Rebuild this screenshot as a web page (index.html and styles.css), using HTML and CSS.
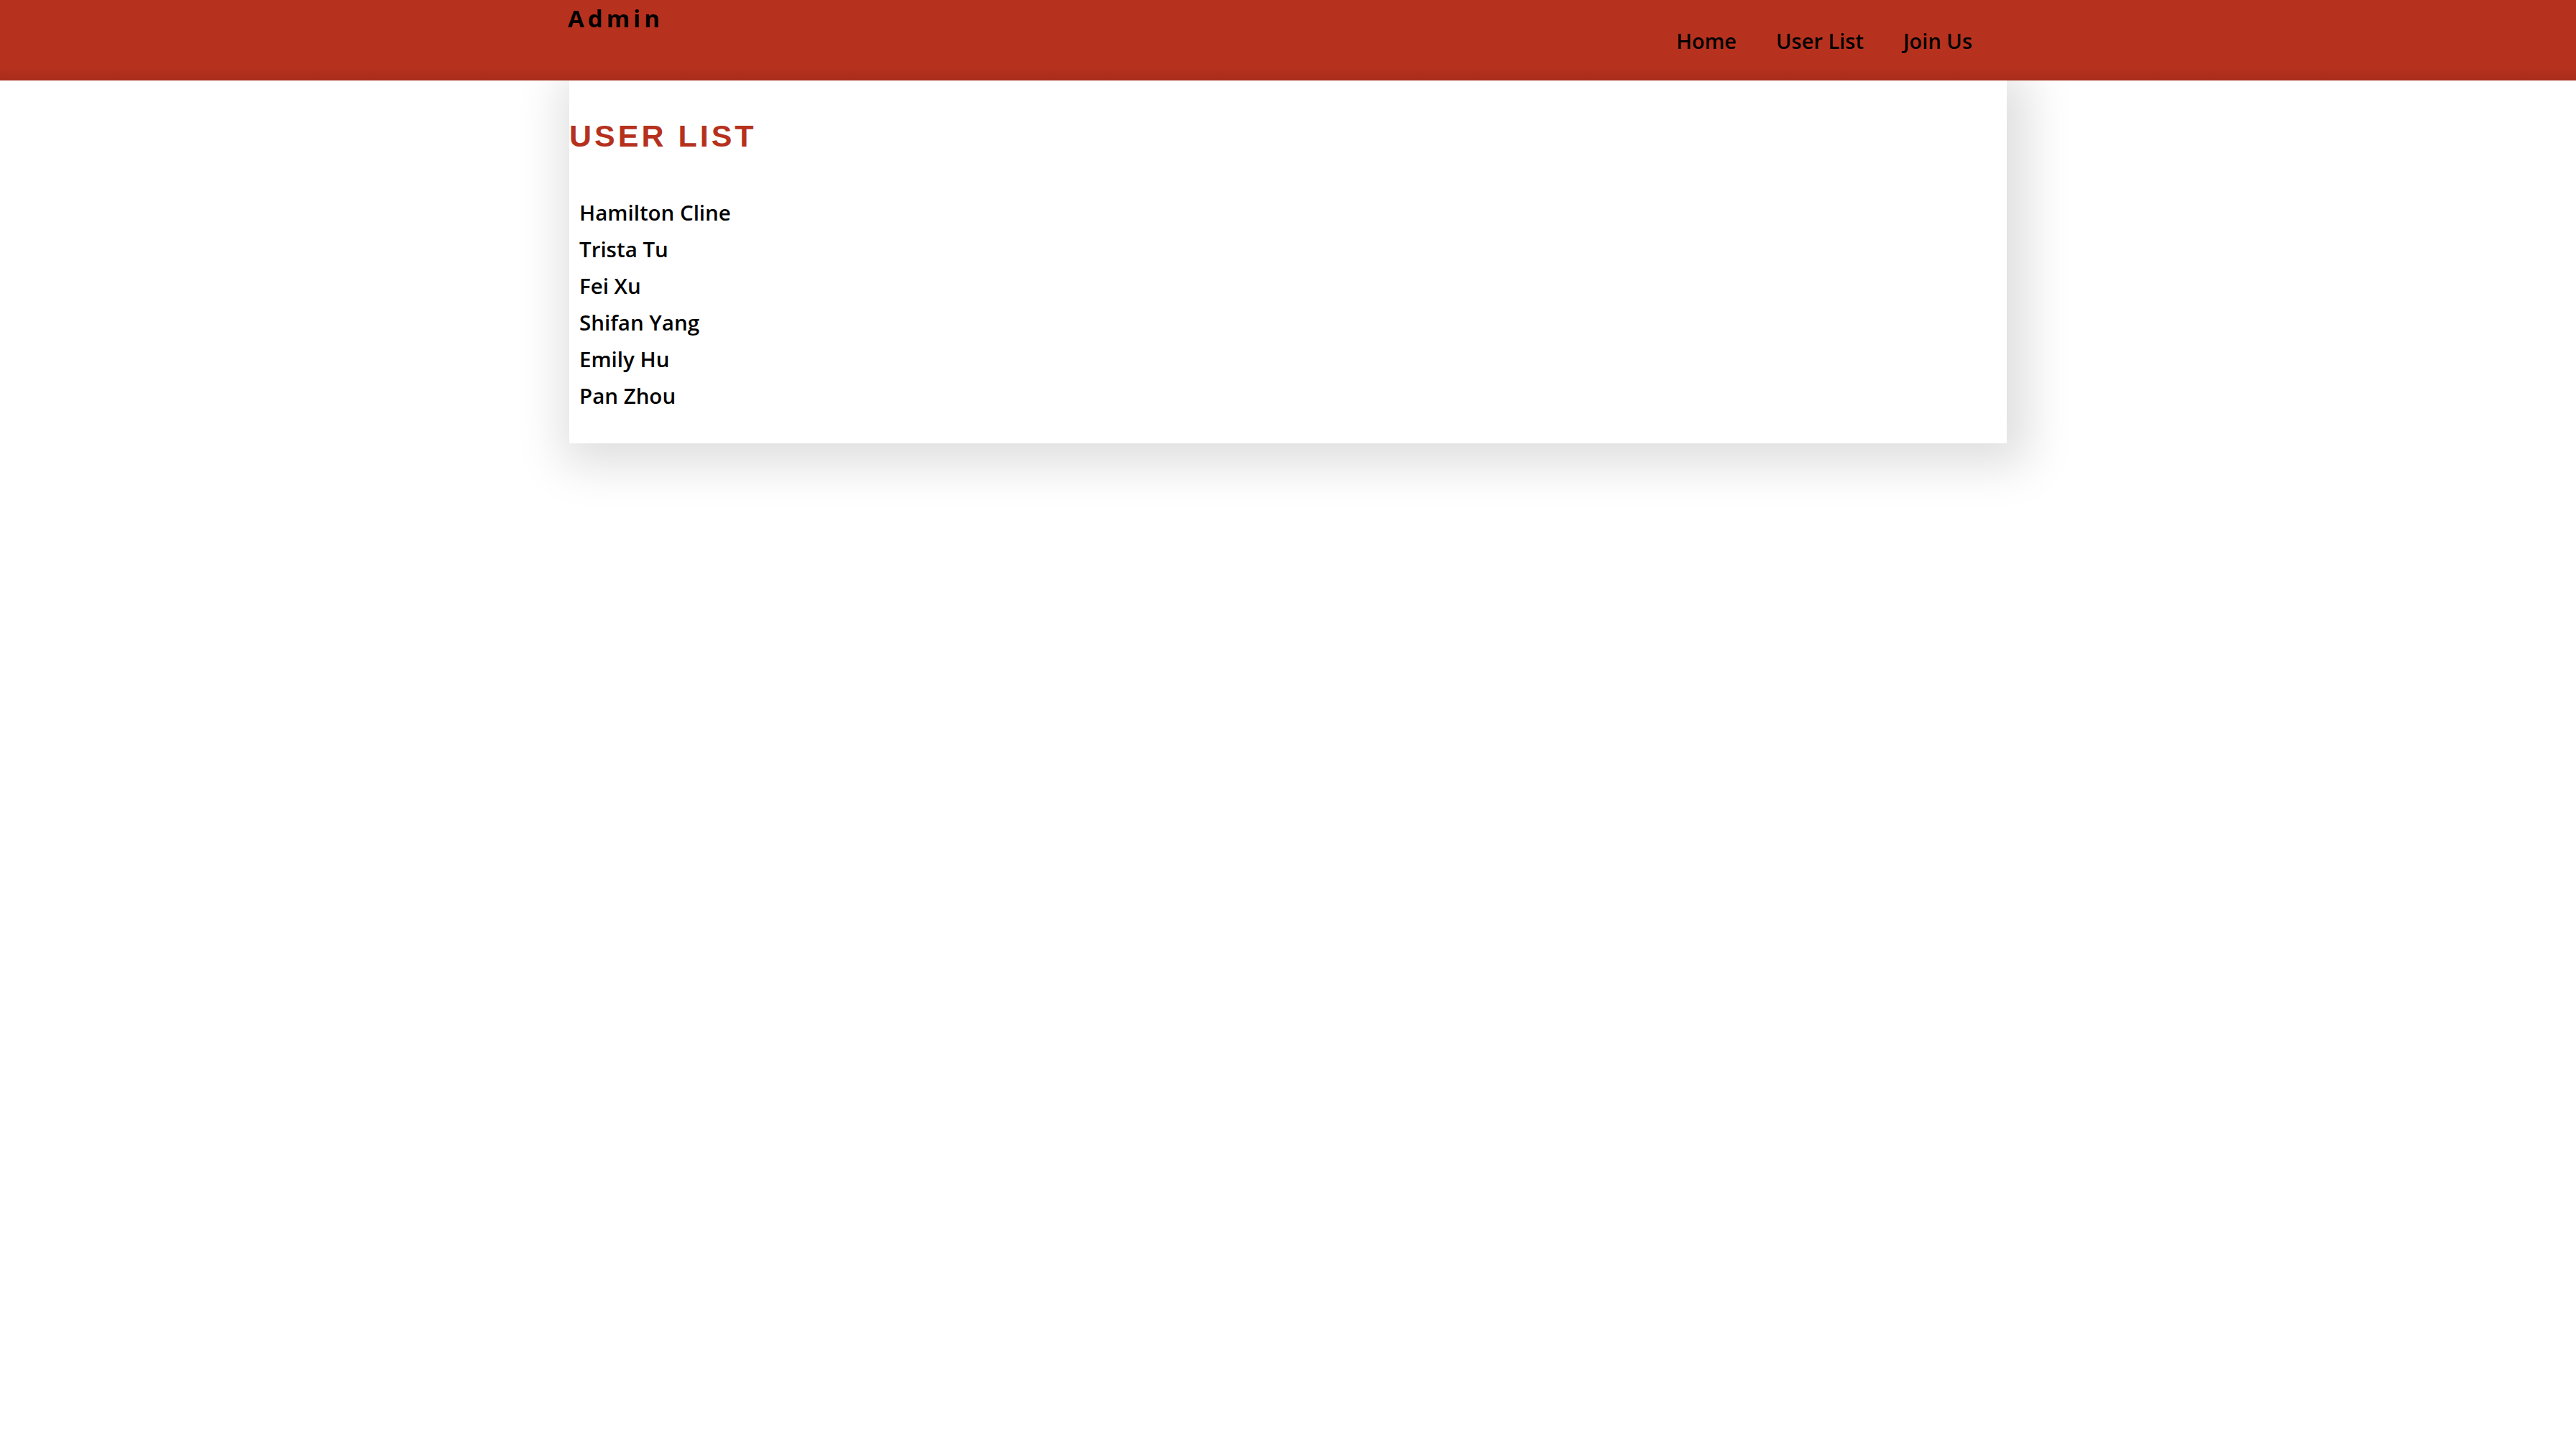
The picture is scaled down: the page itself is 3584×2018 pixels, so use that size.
FILE: index.html
```html
<!DOCTYPE html>
<html lang="en">
<head>
<meta charset="utf-8">
<title>Admin - User List</title>
<link rel="stylesheet" href="styles.css">
</head>
<body>
<header class="topbar">
  <div class="topbar-inner">
    <div class="brand">Admin</div>
    <nav class="nav">
      <a class="nav-link" href="#">Home</a>
      <a class="nav-link" href="#">User List</a>
      <a class="nav-link" href="#">Join Us</a>
    </nav>
  </div>
</header>
<main class="card">
  <h1 class="card-title">USER LIST</h1>
  <ul class="user-list">
    <li class="user">Hamilton Cline</li>
    <li class="user">Trista Tu</li>
    <li class="user">Fei Xu</li>
    <li class="user">Shifan Yang</li>
    <li class="user">Emily Hu</li>
    <li class="user">Pan Zhou</li>
  </ul>
</main>
</body>
</html>
```
FILE: styles.css
```css
html, body {
  margin: 0;
  padding: 0;
  background: #ffffff;
}

body {
  min-height: 100vh;
  font-family: "Open Sans", "Noto Sans", sans-serif;
  color: #000;
}

.topbar {
  position: relative;
  z-index: 2;
  height: 112px;
  background: linear-gradient(to bottom, #b7321e 0%, #b7321e 82%, #a82c1b 100%);
}

.topbar-inner {
  width: 2000px;
  height: 112px;
  margin: 0 auto;
  display: flex;
  justify-content: space-between;
  align-items: center;
}

.brand {
  align-self: flex-start;
  margin-top: 3px;
  margin-left: -2px;
  font-size: 33px;
  font-weight: 700;
  letter-spacing: 5px;
  color: #000;
}

.nav {
  display: flex;
  gap: 55px;
  padding-right: 48px;
}

.nav-link {
  font-size: 29px;
  font-weight: 600;
  color: #000;
  text-decoration: none;
}

.card {
  position: relative;
  z-index: 1;
  display: block;
  width: 2000px;
  margin: 0 auto;
  box-sizing: border-box;
  padding: 53px 0 41px 0;
  background: #fff;
  box-shadow: 10px 10px 60px 20px rgba(0, 0, 0, 0.13);
}

.card-title {
  margin: 0;
  font-family: "Liberation Sans", Arial, sans-serif;
  font-size: 43px;
  line-height: 48px;
  font-weight: 700;
  letter-spacing: 4px;
  color: #b5311d;
}

.user-list {
  list-style: none;
  margin: 57px 0 0 0;
  padding: 0 0 0 14px;
}

.user {
  font-size: 29.5px;
  font-weight: 600;
  line-height: 51px;
}
```
